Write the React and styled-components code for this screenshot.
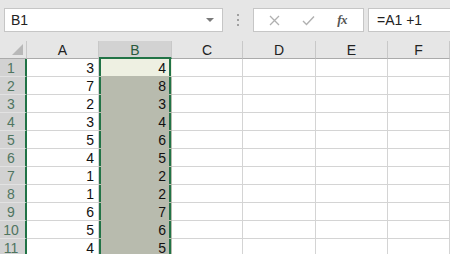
import React from "react";
import styled, { createGlobalStyle } from "styled-components";

const Global = createGlobalStyle`
  html, body { margin: 0; padding: 0; background: #ffffff; overflow: hidden; }
  body { font-family: "Liberation Sans", Arial, sans-serif; }
  * { box-sizing: border-box; }
`;

const GREEN = "#217346";

const Page = styled.div`
  width: 450px;
  height: 254px;
  overflow: hidden;
  display: flex;
  flex-direction: column;
`;

const Toolbar = styled.div`
  height: 41px;
  background: #e6e6e6;
  display: flex;
  align-items: flex-start;
  padding: 8px 0 0 4px;
  flex: none;
`;

const Box = styled.div`
  height: 24px;
  background: #ffffff;
  border: 1px solid #c6c6c6;
  display: flex;
  align-items: center;
  flex: none;
`;

const NameBox = styled(Box)`
  width: 219px;
  padding: 0 8px 0 6px;
  justify-content: space-between;
  font-size: 14px;
  color: #222;
`;

const Caret = styled.span`
  width: 0;
  height: 0;
  border-left: 4px solid transparent;
  border-right: 4px solid transparent;
  border-top: 4px solid #7a7a7a;
`;

const Dots = styled.div`
  width: 30px;
  height: 24px;
  display: flex;
  flex-direction: column;
  align-items: center;
  justify-content: center;
  gap: 3px;
  flex: none;
  & > span {
    width: 2px;
    height: 2px;
    background: #a0a0a0;
  }
`;

const ButtonsBox = styled(Box)`
  width: 111px;
  justify-content: space-around;
  padding: 0 4px;
`;

const IconSlot = styled.span`
  width: 30px;
  display: flex;
  justify-content: center;
  align-items: center;
`;

const Fx = styled.span`
  font-family: "Liberation Serif", "Times New Roman", serif;
  font-style: italic;
  font-weight: bold;
  font-size: 13px;
  color: #555;
  letter-spacing: -0.5px;
`;

const FormulaBox = styled(Box)`
  flex: 1;
  margin-left: 4px;
  border-right: none;
  padding-left: 8px;
  font-size: 14px;
  color: #222;
  white-space: pre;
`;

const Sheet = styled.div`
  display: grid;
  grid-template-columns: 27px 72px 73px 71px 73px 72px 1fr;
  grid-auto-rows: 18px;
  flex: none;
`;

const Corner = styled.div`
  background: #e6e6e6;
  border-bottom: 1px solid #ababab;
  border-right: 1px solid #c8c8c8;
  display: flex;
  align-items: flex-end;
  justify-content: flex-end;
  padding: 0 3px 3px 0;
`;

const Tri = styled.span`
  width: 0;
  height: 0;
  border-left: 11px solid transparent;
  border-bottom: 11px solid #b8b8b8;
`;

const ColHead = styled.div`
  background: ${(p) => (p.$sel ? "#d2d2d2" : "#e6e6e6")};
  border-right: 1px solid #c8c8c8;
  border-bottom: ${(p) => (p.$sel ? `2px solid ${GREEN}` : "1px solid #ababab")};
  display: flex;
  align-items: center;
  justify-content: center;
  font-size: 14px;
  color: ${(p) => (p.$sel ? "#2a5a3c" : "#222")};
  padding-top: 1px;
`;

const RowHead = styled.div`
  background: #d2d2d2;
  border-right: 2px solid ${GREEN};
  border-bottom: 1px solid #e2e2e2;
  display: flex;
  align-items: center;
  justify-content: center;
  font-size: 14px;
  color: #4f7560;
  padding-right: 3px;
`;

const Cell = styled.div`
  background: ${(p) => (p.$active ? "#eef0e2" : p.$sel ? "#b8bbae" : "#ffffff")};
  border-right: 1px solid #d4d4d4;
  border-bottom: 1px solid ${(p) => (p.$sel ? "#b8bbae" : "#d4d4d4")};
  display: flex;
  align-items: center;
  justify-content: flex-end;
  padding-right: 4px;
  font-size: 14px;
  color: #111;
  box-shadow: ${(p) =>
    p.$sel ? `inset 2px 0 0 ${GREEN}, inset -2px 0 0 ${GREEN}` : "none"};
  ${(p) => p.$sel && "border-right-color: transparent; padding-right: 5px;"}
`;

const a = [3, 7, 2, 3, 5, 4, 1, 1, 6, 5, 4];
const cols = ["A", "B", "C", "D", "E", "F"];

function XIcon() {
  return (
    <svg width="11" height="11" viewBox="0 0 11 11">
      <path d="M1 1 L10 10 M10 1 L1 10" stroke="#b0b0b0" strokeWidth="1.3" />
    </svg>
  );
}

function CheckIcon() {
  return (
    <svg width="13" height="11" viewBox="0 0 13 11">
      <path d="M1 6 L4.5 9.5 L12 1.5" stroke="#b0b0b0" strokeWidth="1.4" fill="none" />
    </svg>
  );
}

export default function App() {
  return (
    <Page>
      <Global />
      <Toolbar>
        <NameBox>
          <span>B1</span>
          <Caret />
        </NameBox>
        <Dots>
          <span />
          <span />
          <span />
        </Dots>
        <ButtonsBox>
          <IconSlot>
            <XIcon />
          </IconSlot>
          <IconSlot>
            <CheckIcon />
          </IconSlot>
          <IconSlot>
            <Fx>fx</Fx>
          </IconSlot>
        </ButtonsBox>
        <FormulaBox>=A1 +1</FormulaBox>
      </Toolbar>
      <Sheet>
        <Corner>
          <Tri />
        </Corner>
        {cols.map((c) => (
          <ColHead key={c} $sel={c === "B"}>
            {c}
          </ColHead>
        ))}
        {a.map((v, i) => (
          <React.Fragment key={i}>
            <RowHead>{i + 1}</RowHead>
            <Cell>{v}</Cell>
            <Cell $sel $active={i === 0}>
              {v + 1}
            </Cell>
            <Cell />
            <Cell />
            <Cell />
            <Cell />
          </React.Fragment>
        ))}
      </Sheet>
    </Page>
  );
}
